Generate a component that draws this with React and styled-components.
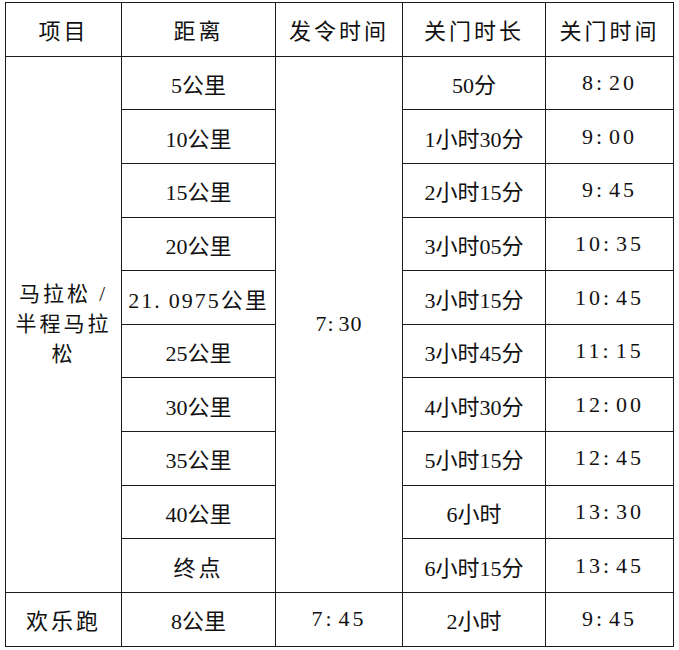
import styled, { createGlobalStyle } from "styled-components";

const GlobalStyle = createGlobalStyle`
  html, body {
    margin: 0;
    padding: 0;
    background: #ffffff;
  }
`;

const COLUMNS = [116, 154, 127, 143, 128];

const HEADERS = ["项目", "距离", "发令时间", "关门时长", "关门时间"];

const MARATHON_ROWS = [
  { distance: "5公里", duration: "50分", close: "8:20" },
  { distance: "10公里", duration: "1小时30分", close: "9:00" },
  { distance: "15公里", duration: "2小时15分", close: "9:45" },
  { distance: "20公里", duration: "3小时05分", close: "10:35" },
  { distance: "21.0975公里", duration: "3小时15分", close: "10:45", wide: true },
  { distance: "25公里", duration: "3小时45分", close: "11:15" },
  { distance: "30公里", duration: "4小时30分", close: "12:00" },
  { distance: "35公里", duration: "5小时15分", close: "12:45" },
  { distance: "40公里", duration: "6小时", close: "13:30" },
  { distance: "终点", duration: "6小时15分", close: "13:45", spaced: true },
];

// "8:20" -> 8: 20 with the gap after the colon, like the source document
const Clock = ({ value }) => {
  const [h, m] = value.split(":");
  return (
    <>
      {h}:<Gap $w={4} />
      {m}
    </>
  );
};

const App = () => {
  return (
    <>
      <GlobalStyle />
      <Page>
        <Table>
          <colgroup>
            {COLUMNS.map((w, i) => (
              <col key={i} style={{ width: w }} />
            ))}
          </colgroup>
          <tbody>
            <Row>
              {HEADERS.map((h) => (
                <Cell key={h} $spacing={3}>
                  {h}
                </Cell>
              ))}
            </Row>
            {MARATHON_ROWS.map((r, i) => (
              <Row key={r.distance}>
                {i === 0 && (
                  <Cell rowSpan={10} $spacing={3}>
                    <EventName>马拉松 / 半程马拉松</EventName>
                  </Cell>
                )}
                <Cell $spacing={r.wide ? 2 : r.spaced ? 3 : 0}>
                  {r.wide ? (
                    <>
                      21.<Gap $w={7} />0975公里
                    </>
                  ) : (
                    r.distance
                  )}
                </Cell>
                {i === 0 && (
                  <Cell rowSpan={10} $spacing={1}>
                    <Clock value="7:30" />
                  </Cell>
                )}
                <Cell>{r.duration}</Cell>
                <Cell $spacing={3}>
                  <Clock value={r.close} />
                </Cell>
              </Row>
            ))}
            <Row>
              <Cell $spacing={3}>欢乐跑</Cell>
              <Cell>8公里</Cell>
              <Cell $spacing={3}>
                <Clock value="7:45" />
              </Cell>
              <Cell>2小时</Cell>
              <Cell $spacing={3}>
                <Clock value="9:45" />
              </Cell>
            </Row>
          </tbody>
        </Table>
      </Page>
    </>
  );
};

export default App;

const Page = styled.div`
  width: 679px;
  height: 650px;
  padding: 2px 0 0 5px;
  box-sizing: border-box;
  background: #ffffff;
`;

const Table = styled.table`
  width: 669px;
  table-layout: fixed;
  border-collapse: collapse;
  font-family: "Liberation Serif", "Noto Sans CJK SC", serif;
  font-size: 22px;
  color: #111111;
`;

const Row = styled.tr`
  height: 53.65px;
`;

const Cell = styled.td`
  border: 1px solid #1a1a1a;
  text-align: center;
  vertical-align: middle;
  padding: 0;
  letter-spacing: ${(p) => p.$spacing || 0}px;
  white-space: nowrap;
`;

const EventName = styled.div`
  white-space: normal;
  line-height: 30px;
  padding: 0 5px;
  letter-spacing: 3px;
  font-size: 21px;
`;

const Gap = styled.span`
  display: inline-block;
  width: ${(p) => p.$w}px;
`;
